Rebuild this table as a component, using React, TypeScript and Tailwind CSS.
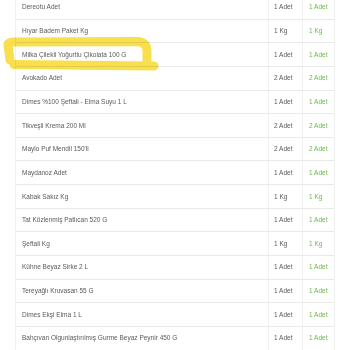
import React from "react";

const rows: [string, string][] = [
  ["Dereotu Adet", "1 Adet"],
  ["Hıyar Badem Paket Kg", "1 Kg"],
  ["Milka Çilekli Yoğurtlu Çikolata 100 G", "1 Adet"],
  ["Avokado Adet", "2 Adet"],
  ["Dimes %100 Şeftali - Elma Suyu 1 L", "1 Adet"],
  ["Tikveşli Krema 200 Ml", "2 Adet"],
  ["Maylo Puf Mendil 150'li", "2 Adet"],
  ["Maydanoz Adet", "1 Adet"],
  ["Kabak Sakız Kg", "1 Kg"],
  ["Tat Közlenmiş Patlıcan 520 G", "1 Adet"],
  ["Şeftali Kg", "1 Kg"],
  ["Kühne Beyaz Sirke 2 L", "1 Adet"],
  ["Tereyağlı Kruvasan 55 G", "1 Adet"],
  ["Dimes Ekşi Elma 1 L", "1 Adet"],
  ["Bahçıvan Olgunlaştırılmış Gurme Beyaz Peynir 450 G", "1 Adet"],
];

export default function App() {
  return (
    <div
      className="relative w-[350px] h-[350px] overflow-hidden bg-white text-[6.5px] text-[#5a5a5a]"
      style={{ fontFamily: '"Liberation Sans", Arial, sans-serif' }}
    >
      <div className="ml-[15px] w-[320px] -mt-[4px] border-l border-r border-[#efefef]">
        {rows.map(([name, qty], i) => (
          <div
            key={i}
            className="grid grid-cols-[252px_34px_32px] h-[23.65px] border-b border-[#e9e9e9]"
          >
            <div className="flex items-center pl-[6px] whitespace-nowrap">{name}</div>
            <div className="flex items-center pl-[5px] border-l border-[#f0f0f0] whitespace-nowrap">{qty}</div>
            <div className="flex items-center pl-[6px] border-l border-[#f0f0f0] whitespace-nowrap text-[#6ab74c]">{qty}</div>
          </div>
        ))}
      </div>
      <svg
        className="absolute left-0 top-0 pointer-events-none mix-blend-multiply"
        width="350"
        height="350"
        viewBox="0 0 350 350"
      >
        <g stroke="#f8dc3a" strokeWidth="9" strokeLinecap="round" strokeLinejoin="round" fill="none" opacity="0.9">
          <path d="M 10 60 L 8 45 Q 8 42 14 42 L 138 41.5 Q 147 42.5 147 51 L 147 62" />
          <path d="M 154 66 L 14 64.5" />
        </g>
      </svg>
    </div>
  );
}
